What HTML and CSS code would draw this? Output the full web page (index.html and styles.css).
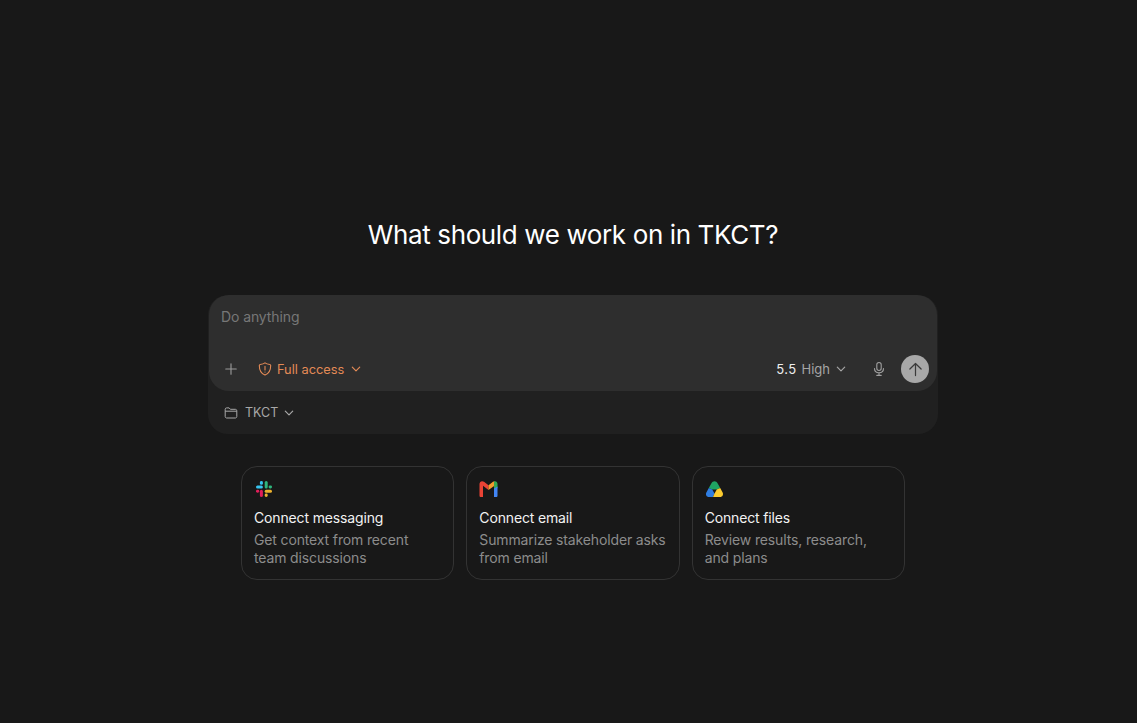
FILE: index.html
```html
<!DOCTYPE html>
<html lang="en">
<head>
<meta charset="utf-8">
<title>New task</title>
<link rel="stylesheet" href="styles.css">
</head>
<body>
<main class="page">
  <h1 class="title">What should we work on in TKCT?</h1>
  <section class="composer-shell">
    <div class="composer">
      <div class="placeholder">Do anything</div>
      <div class="toolbar">
        <div class="tool-left">
          <svg class="plus" viewBox="0 0 16 16" fill="none" stroke="currentColor" stroke-width="1.3" stroke-linecap="round"><path d="M8 2v12M2 8h12"/></svg>
          <div class="access">
            <svg class="ic14" viewBox="0 0 14 14" fill="none" stroke="currentColor" stroke-width="1.1" stroke-linejoin="round" stroke-linecap="round"><path d="M7 .9c1.100.9 2.800 1.400 4.800 1.600.7 0 .9.400.9 1 0 4.700-1.700 8-5.700 9.600C3 11.500 1.300 8.200 1.300 3.500c0-.6.200-1 .9-1C4.200 2.300 5.900 1.800 7 .9z"/><path d="M7 4.200v3.800M7 10v.1"/></svg>
            <span>Full access</span>
            <svg class="chev access-chev" viewBox="0 0 10 10" fill="none" stroke="currentColor" stroke-width="1.200" stroke-linecap="round" stroke-linejoin="round"><path d="M1.300 3.200 5 6.900l3.700-3.700"/></svg>
          </div>
        </div>
        <div class="tool-right">
          <span class="model">5.5</span>
          <span class="effort">High</span>
          <svg class="chev effort-chev" viewBox="0 0 10 10" fill="none" stroke="currentColor" stroke-width="1.200" stroke-linecap="round" stroke-linejoin="round"><path d="M1.300 3.200 5 6.900l3.700-3.700"/></svg>
          <svg class="mic" viewBox="0 0 14 16" fill="none" stroke="currentColor" stroke-width="1.100" stroke-linecap="round"><rect x="4.800" y="1.500" width="4.400" height="8" rx="2.200"/><path d="M2.500 7.500c0 2.700 2 4.200 4.500 4.200s4.500-1.500 4.500-4.200M7 11.700v2.500M4.800 14.400h4.400"/></svg>
          <div class="send">
            <svg viewBox="0 0 16 16" fill="none" stroke="currentColor" stroke-width="1.300" stroke-linecap="round" stroke-linejoin="round"><path d="M8 14.500V1.800M2 7.500 8 1.600l6 5.900"/></svg>
          </div>
        </div>
      </div>
    </div>
    <div class="project">
      <svg class="ic14" viewBox="0 0 14 14" fill="none" stroke="currentColor" stroke-width="1" stroke-linejoin="round"><path d="M1.200 4V3.300C1.200 2.400 1.800 1.900 2.600 1.900h2.500l1.300 1.400h5c.8 0 1.400.6 1.400 1.400v5.800c0 .9-.6 1.500-1.400 1.500H2.600c-.8 0-1.400-.6-1.400-1.500z"/><path d="M1.200 5.200h11.600"/></svg>
      <span class="project-name">TKCT</span>
      <svg class="chev" viewBox="0 0 10 10" fill="none" stroke="currentColor" stroke-width="1.200" stroke-linecap="round" stroke-linejoin="round"><path d="M1.300 3.200 5 6.900l3.700-3.700"/></svg>
    </div>
  </section>
  <section class="cards">
    <article class="card">
      <svg class="logo" viewBox="0 0 20 18">
        <rect x="2" y="5.600" width="6.900" height="3" rx="1.500" fill="#36c5f0"/><rect x="5.900" y="1" width="3" height="3.800" rx="1.400" fill="#36c5f0"/>
        <rect x="10.700" y="1" width="3" height="7.400" rx="1.500" fill="#2eb67d"/><rect x="14.600" y="5.400" width="3.400" height="3" rx="1.400" fill="#2eb67d"/>
        <rect x="10.700" y="9.700" width="7.300" height="3" rx="1.500" fill="#ecb22e"/><rect x="10.700" y="13.500" width="3" height="3.500" rx="1.400" fill="#ecb22e"/>
        <rect x="5.900" y="9.700" width="3" height="7.300" rx="1.500" fill="#e01e5a"/><rect x="2" y="9.700" width="3.200" height="3" rx="1.400" fill="#e01e5a"/>
      </svg>
      <h2 class="card-title">Connect messaging</h2>
      <p class="card-text">Get context from recent team discussions</p>
    </article>
    <article class="card">
      <svg class="logo" viewBox="0 0 20 18">
        <path d="M.5 4C.5 1.500 3 .3 5 1.800L9.500 5.300V10L4 5.800V17H2C1 17 .5 16.500.5 15.500z" fill="#ea4335"/>
        <path d="M9.500 5.300 14 1.800c.5-.4 1-.6 1.500-.6V5.800L9.500 10z" fill="#f59a2e"/>
        <path d="M15 1.400C16.800.7 18.500 2 18.500 4V8L15 10.500z" fill="#34a853"/>
        <path d="M15 8.500 18.500 6.500V15.500C18.500 16.500 18 17 17 17H15z" fill="#4285f4"/>
      </svg>
      <h2 class="card-title">Connect email</h2>
      <p class="card-text">Summarize stakeholder asks from email</p>
    </article>
    <article class="card">
      <svg class="logo" viewBox="0 0 20 18">
        <path d="M6.300 3.500C7.800.6 11.200.6 12.700 3.500L15.200 8 11.800 9.500H7.200L3.800 8z" fill="#1fa463"/>
        <path d="M3.800 8 7.200 9.500 9.500 13.500 8 17H4C1.500 17 .2 14.500 1.500 12.200z" fill="#2f7de1"/>
        <path d="M15.200 8 17.500 12.200C18.800 14.500 17.500 17 15 17H8L9.500 13.500 11.800 9.500z" fill="#fbcb2f"/>
      </svg>
      <h2 class="card-title">Connect files</h2>
      <p class="card-text">Review results, research, and plans</p>
    </article>
  </section>
</main>
</body>
</html>
```

FILE: styles.css
```css
* { box-sizing: border-box; }
html, body { margin: 0; height: 100%; }
body {
  background: #181818;
  color: #fff;
  font-family: Inter, "Liberation Sans", sans-serif;
  overflow: hidden;
}
.page {
  display: flex;
  flex-direction: column;
  align-items: center;
  padding-top: 218px;
  padding-left: 9px;
}
.title {
  margin: 0;
  font-size: 26px;
  line-height: 34px;
  font-weight: 400;
  letter-spacing: -0.38px;
}
.composer-shell {
  width: 730px;
  height: 139px;
  margin-top: 43px;
  background: #202020;
  border-radius: 20px;
  padding: 0 1px;
}
.composer {
  height: 96px;
  background: #2e2e2e;
  border-radius: 20px;
  padding: 13px 8px 8px 12px;
  display: flex;
  flex-direction: column;
  justify-content: space-between;
}
.placeholder {
  font-size: 14px;
  line-height: 18px;
  letter-spacing: -0.1px;
  color: #777;
}
.toolbar {
  display: flex;
  align-items: center;
  justify-content: space-between;
  height: 28px;
}
.tool-left, .tool-right, .access, .project { display: flex; align-items: center; }
.plus { width: 14px; height: 14px; color: #9a9a9a; margin-left: 3px; }
.access {
  margin-left: 20px;
  gap: 5px;
  color: #e38a56;
  font-size: 12.8px;
}
.ic14 { width: 14px; height: 14px; flex: none; }
.chev { width: 10px; height: 10px; flex: none; margin-left: 1px; }
.access-chev { margin-left: 2px; }
.model { font-size: 13px; color: #eee; letter-spacing: 0.4px; }
.effort { font-size: 13px; color: #a5a5a5; margin-left: 5px; }
.effort-chev { color: #a5a5a5; margin-left: 6px; }
.mic { width: 14px; height: 16px; color: #a0a0a0; margin-left: 26px; }
.send {
  width: 28px;
  height: 28px;
  border-radius: 50%;
  background: #a8a8a8;
  color: #3a3a3a;
  margin-left: 15px;
  display: flex;
  align-items: center;
  justify-content: center;
}
.send svg { width: 15px; height: 15px; }
.project {
  height: 43px;
  padding-left: 15px;
  color: #a8a8a8;
  font-size: 12.5px;
}
.project-name { margin-left: 7px; margin-right: 5px; }
.cards {
  display: flex;
  gap: 12px;
  margin-top: 32px;
}
.card {
  width: 213.33px;
  height: 114px;
  border: 1px solid #333;
  border-radius: 16px;
  padding: 13px 12px;
}
.logo { display: block; width: 20px; height: 18px; margin-bottom: 10px; }
.card-title {
  margin: 0;
  font-size: 14px;
  line-height: 20px;
  font-weight: 400;
  letter-spacing: -0.15px;
  color: #f2f2f2;
}
.card-text {
  margin: 3px 0 0;
  font-size: 14px;
  line-height: 18px;
  letter-spacing: -0.14px;
  color: #8c8c8c;
}
```
